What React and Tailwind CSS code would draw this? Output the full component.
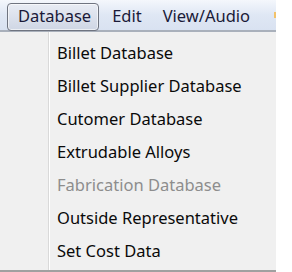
import React from "react";

const items = [
  { label: "Billet Database" },
  { label: "Billet Supplier Database" },
  { label: "Cutomer Database" },
  { label: "Extrudable Alloys" },
  { label: "Fabrication Database", disabled: true },
  { label: "Outside Representative" },
  { label: "Set Cost Data" },
];

export default function App() {
  return (
    <div className="w-[292px] h-[272px] bg-white flex" style={{ fontFamily: "'Noto Sans', sans-serif" }}>
      <div className="w-[276px] h-full flex flex-col bg-[#f0f0f0]">
        {/* menu bar */}
        <div className="h-[32px] flex items-center bg-gradient-to-b from-[#f4f7fc] via-[#dfe7f4] to-[#d9e2f1] border-b-2 border-[#a9b0bb] relative text-[16.5px] text-[#1a1a38]">
          <div className="ml-[7px] mt-[3px] h-[28px] pl-[10px] pr-[7px] flex items-center rounded-[4px] border border-[#6f7480] bg-gradient-to-b from-[#e8ecf4] to-[#cfd6e4] shadow-[inset_0_0_0_1px_rgba(255,255,255,0.6)]">
            Database
          </div>
          <div className="ml-[13px] mt-[3px]">Edit</div>
          <div className="ml-[21px] mt-[3px]">View/Audio</div>
          <div className="absolute right-0 top-[12px] w-[2px] h-[6px] bg-[#f2c26a]" />
        </div>
        {/* dropdown */}
        <div className="flex-1 flex border-b-2 border-[#a0a0a0]">
          <div className="w-[49px] border-r border-[#d9d9d9] shadow-[1px_0_0_#ffffff]" />
          <div className="flex-1 pt-[5px] pl-[8px]">
            {items.map((it) => (
              <div
                key={it.label}
                className={`h-[33px] flex items-center text-[16.5px] ${it.disabled ? "text-[#8d8d8d]" : "text-[#0a0a0a]"}`}
              >
                {it.label}
              </div>
            ))}
          </div>
        </div>
      </div>
    </div>
  );
}
